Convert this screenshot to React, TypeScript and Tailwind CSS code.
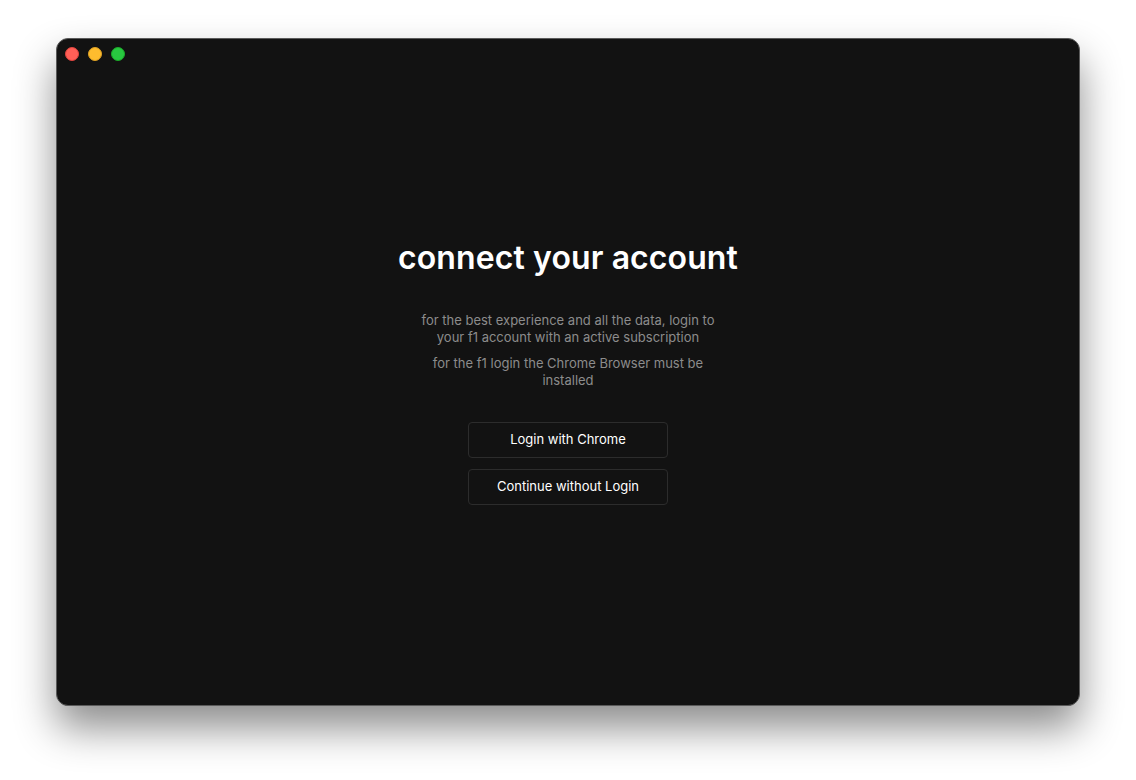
export default function App() {
  return (
    <div className="w-[1136px] h-[780px] bg-white overflow-hidden pt-[38px] pl-[56px]" style={{ fontFamily: 'Inter, "Noto Sans", sans-serif' }}>
      <div className="relative w-[1024px] h-[668px] rounded-[12px] bg-[#121212] border border-[#5a5a5a] shadow-[0_22px_40px_rgba(0,0,0,0.45)] flex flex-col">
        <div className="flex gap-[9px] px-[8px] pt-[8px]">
          <span className="w-[14px] h-[14px] rounded-full bg-[#ff5f57] border border-[#e0443e]" />
          <span className="w-[14px] h-[14px] rounded-full bg-[#febc2e] border border-[#dea123]" />
          <span className="w-[14px] h-[14px] rounded-full bg-[#28c840] border border-[#1aab29]" />
        </div>
        <div className="flex-1 flex flex-col items-center justify-center pb-[24px]">
          <h1 className="text-[32px] font-semibold text-white tracking-[0.1px] leading-[40px]">connect your account</h1>
          <div className="mt-[34px] w-[310px] text-center text-[13px] leading-[17px] text-[#8c8c8c]">
            <p>for the best experience and all the data, login to your f1 account with an active subscription</p>
            <p className="mt-[9px]">for the f1 login the Chrome Browser must be installed</p>
          </div>
          <div className="mt-[33px] flex flex-col gap-[11px]">
            <button className="w-[200px] h-[36px] rounded-[4px] border border-[#2c2c2c] bg-[#121212] text-[13px] text-white">Login with Chrome</button>
            <button className="w-[200px] h-[36px] rounded-[4px] border border-[#2c2c2c] bg-[#121212] text-[13px] text-white">Continue without Login</button>
          </div>
        </div>
      </div>
    </div>
  );
}
